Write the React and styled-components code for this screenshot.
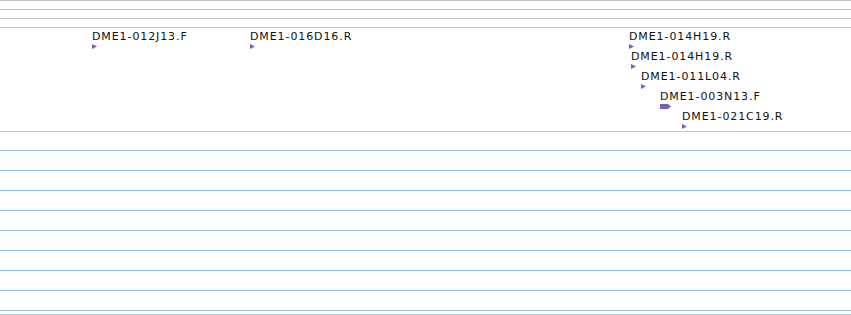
import React from "react";
import styled, { createGlobalStyle } from "styled-components";

const Global = createGlobalStyle`
  html, body { margin: 0; padding: 0; background: #ffffff; }
  body { font-family: "DejaVu Sans", "Liberation Sans", sans-serif; overflow: hidden; }
`;

const Page = styled.div`
  width: 851px;
  height: 315px;
  display: flex;
  flex-direction: column;
  overflow: hidden;
`;

const RulerBand = styled.div`
  height: 9px;
  border-top: 1px solid #c2c2c2;
  box-sizing: border-box;
  flex: none;
`;

const FeatureTrack = styled.div`
  position: relative;
  height: 104px;
  border-top: 1px solid #c2c2c2;
  box-sizing: border-box;
  flex: none;
`;

const GridTrack = styled.div`
  border-top: 1px solid #c2c2c2;
  padding-top: 18px;
  display: flex;
  flex-direction: column;
  flex: none;
  height: 183px;
  box-sizing: border-box;
`;

const GridRow = styled.div`
  height: ${(p) => p.$h}px;
  border-top: 1px solid #8fbde2;
  box-sizing: border-box;
  flex: none;
`;

const BottomRule = styled.div`
  border-top: 1px solid #c2c2c2;
  flex: 1;
`;

const Feature = styled.div`
  position: absolute;
  display: flex;
  flex-direction: column;
  align-items: flex-start;
`;

const Label = styled.span`
  font-size: 11px;
  line-height: 13px;
  color: #111;
  white-space: nowrap;
  letter-spacing: 0.9px;
`;

const Glyph = styled.svg`
  display: block;
  margin-top: 1px;
  fill: #7b5fb2;
`;

const features = [
  { name: "DME1-012J13.F", x: 92, row: 0 },
  { name: "DME1-016D16.R", x: 250, row: 0 },
  { name: "DME1-014H19.R", x: 629, row: 0 },
  { name: "DME1-014H19.R", x: 631, row: 1 },
  { name: "DME1-011L04.R", x: 641, row: 2 },
  { name: "DME1-003N13.F", x: 660, row: 3, wide: true },
  { name: "DME1-021C19.R", x: 682, row: 4 },
];

function Arrow({ wide }) {
  if (wide) {
    return (
      <Glyph width="12" height="5" viewBox="0 0 12 5">
        <polygon points="0,0 8,0 11,2.5 8,5 0,5" />
      </Glyph>
    );
  }
  return (
    <Glyph width="5" height="5" viewBox="0 0 5 5">
      <polygon points="0,0 5,2.5 0,5" />
    </Glyph>
  );
}

export default function App() {
  const gridHeights = [20, 20, 20, 20, 20, 20, 20, 20, 4];
  return (
    <>
      <Global />
      <Page>
        <RulerBand />
        <RulerBand />
        <RulerBand />
        <FeatureTrack>
          {features.map((f, i) => (
            <Feature key={i} style={{ left: f.x, top: 2 + f.row * 20 }}>
              <Label>{f.name}</Label>
              <Arrow wide={f.wide} />
            </Feature>
          ))}
        </FeatureTrack>
        <GridTrack>
          {gridHeights.map((h, i) => (
            <GridRow key={i} $h={h} />
          ))}
        </GridTrack>
        <BottomRule />
      </Page>
    </>
  );
}
